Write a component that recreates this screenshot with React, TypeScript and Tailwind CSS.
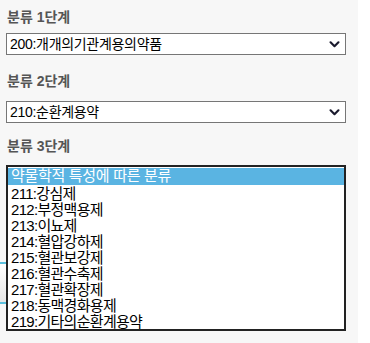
const Chevron = () => (
  <svg width="11" height="7" viewBox="0 0 12 8" className="shrink-0">
    <path d="M1.5 1.5 L6 6 L10.5 1.5" fill="none" stroke="#1a1a2e" strokeWidth="2.4" strokeLinecap="round" strokeLinejoin="round" />
  </svg>
);

const Select = ({ value }: { value: string }) => (
  <div className="flex items-center justify-between h-[22px] w-[340px] ml-[6px] bg-white border border-[#767676] pl-[3px] pr-[5px] text-[14px] leading-none text-black tracking-[-0.3px]">
    <span>{value}</span>
    <Chevron />
  </div>
);

const Label = ({ children }: { children: string }) => (
  <div className="pl-[7px] text-[14px] leading-none font-bold text-[#555555]">{children}</div>
);

const items = [
  "211:강심제",
  "212:부정맥용제",
  "213:이뇨제",
  "214:혈압강하제",
  "215:혈관보강제",
  "216:혈관수축제",
  "217:혈관확장제",
  "218:동맥경화용제",
  "219:기타의순환계용약",
];

export default function App() {
  return (
    <div className="flex" style={{ fontFamily: '"Liberation Sans", "Noto Sans CJK KR", sans-serif' }}>
      <div className="relative w-[358px] h-[343px] bg-[#f7f7f7] flex flex-col pt-[10px]">
        <Label>분류 1단계</Label>
        <div className="mt-[9px]">
          <Select value="200:개개의기관계용의약품" />
        </div>
        <div className="mt-[19px]">
          <Label>분류 2단계</Label>
        </div>
        <div className="mt-[13px]">
          <Select value="210:순환계용약" />
        </div>
        <div className="mt-[16px]">
          <Label>분류 3단계</Label>
        </div>
        <div className="absolute left-0 top-[262px] w-[330px] h-[42px] border-y-2 border-[#5bc0de] bg-gradient-to-b from-white to-[#e6e6e6]" />
        <div className="relative z-10 mt-[12px] ml-[6px] w-[340px] h-[166px] bg-white border-2 border-[#222222] pt-px flex flex-col">
          <div className="h-[17px] bg-[#5ab4e2] text-white text-[15px] leading-[15px] pl-[3px] tracking-[-0.3px]">약물학적 특성에 따른 분류</div>
          {items.map((t) => (
            <div key={t} className="h-[16px] text-black text-[15px] leading-[17px] pl-[3px] tracking-[-0.7px]">
              {t}
            </div>
          ))}
        </div>
      </div>
      <div className="flex-1 h-[343px] bg-white" />
    </div>
  );
}
